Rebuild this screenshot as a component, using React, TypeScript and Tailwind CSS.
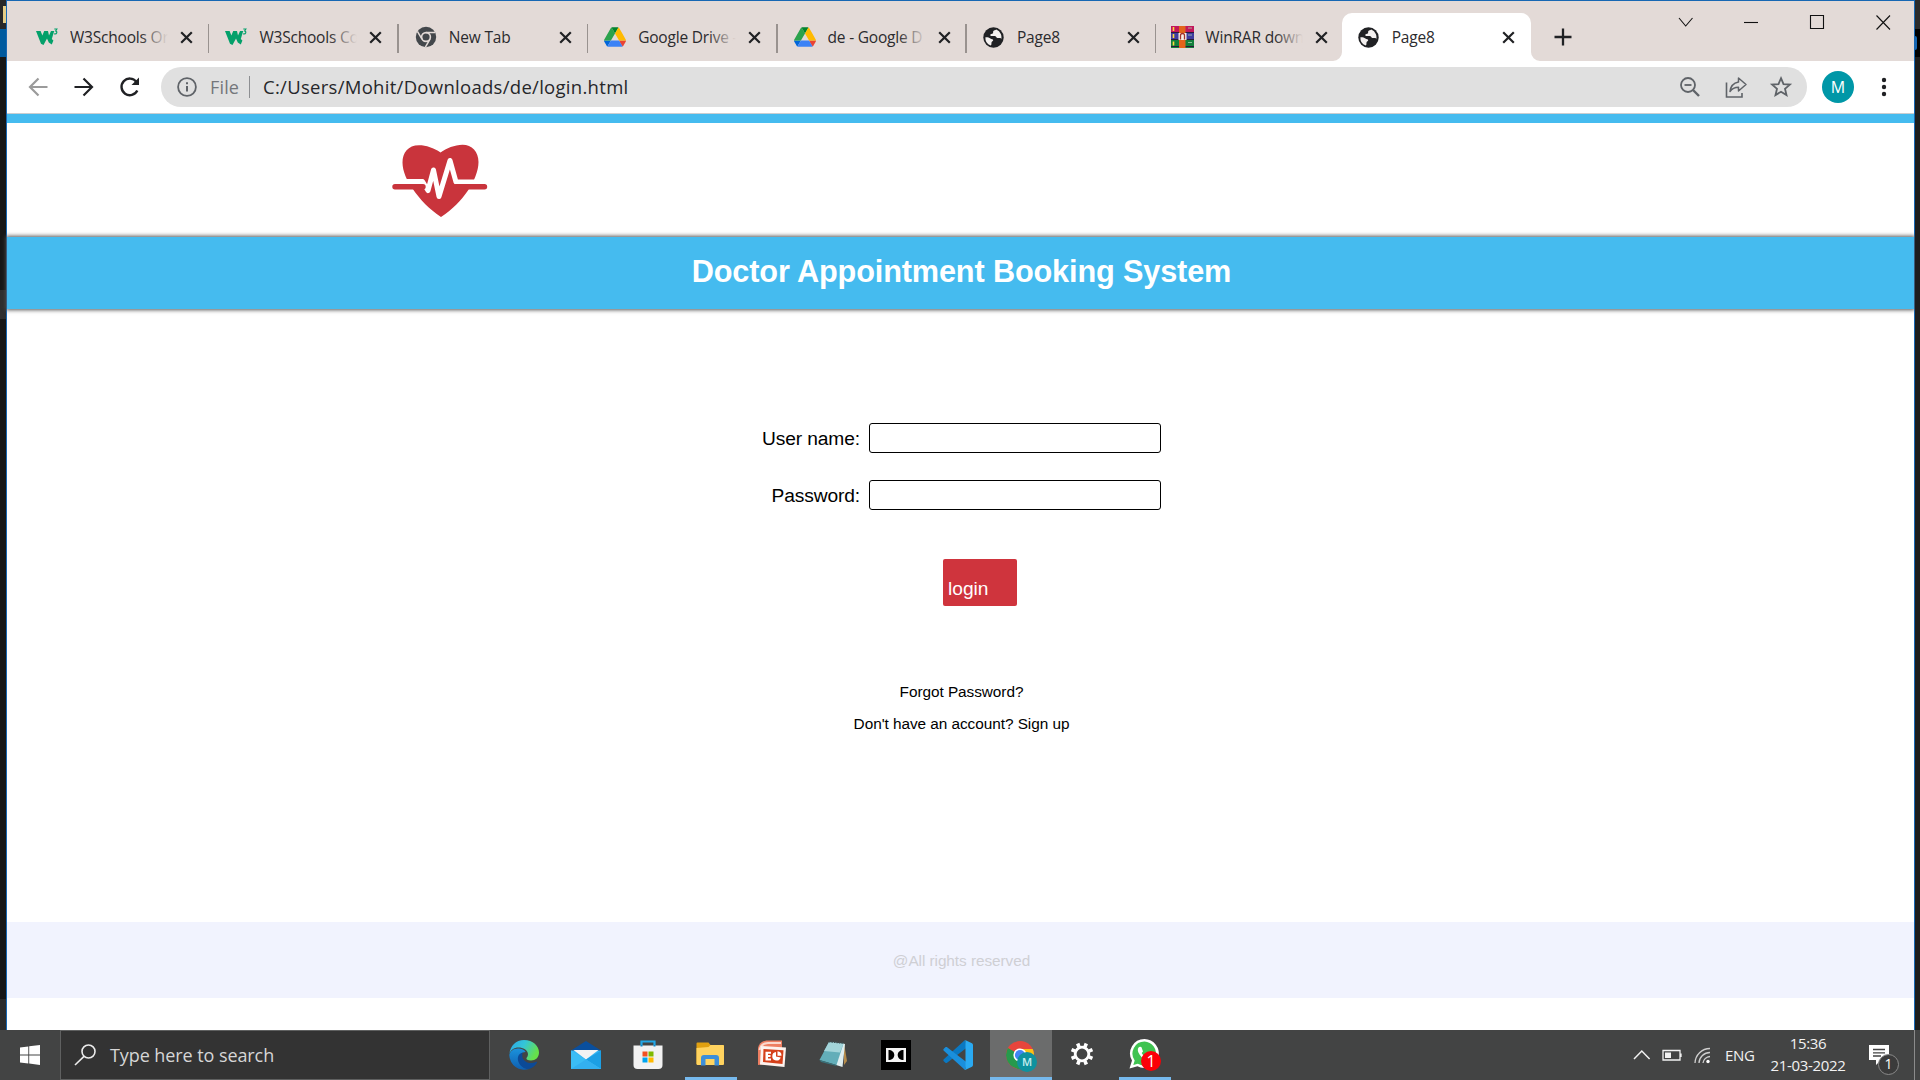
import type { ReactNode } from "react";

const UI = "font-['Open_Sans','Noto_Sans',sans-serif]";
const ARIAL = "font-['Liberation_Sans',Arial,sans-serif]";

/* ---------- favicons ---------- */

const W3 = () => (
  <svg width="22" height="18" viewBox="0 0 22 18">
    <path d="M0 3h4.600l1.800 4.600L8.200 3H12l1 4.600L15 3h3.200l-2.400 8 1.600 1.500-1.600 4-3-2L11 10.500 7.500 17 5 15.800z" fill="#04a06a" />
    <path d="M18.300 1h2.600l-1.300 2c2 .2 1.600 3.600-1.500 2.800" fill="none" stroke="#04a06a" strokeWidth="1.100" />
  </svg>
);

const ChromeGray = () => (
  <svg width="22" height="22" viewBox="0 0 22 22">
    <circle cx="11" cy="11" r="10.200" fill="#43474b" />
    <circle cx="11" cy="11" r="4.400" fill="none" stroke="#e3dad7" strokeWidth="1.600" />
    <path d="M11 6.400h9M7 13.200L2.400 5.400M15 13.200l-4.600 8" stroke="#e3dad7" strokeWidth="1.500" fill="none" />
  </svg>
);

const Drive = () => (
  <svg width="22" height="20" viewBox="0 0 87.3 78">
    <path d="M6.6 66.85l3.85 6.65c.8 1.4 1.95 2.5 3.3 3.3L27.5 53H0c0 1.55.4 3.1 1.2 4.5z" fill="#0066da" />
    <path d="M43.65 25L29.9 1.2c-1.35.8-2.5 1.9-3.3 3.3l-25.4 44A9.06 9.06 0 000 53h27.5z" fill="#2ba24c" />
    <path d="M73.55 76.8c1.35-.8 2.5-1.9 3.3-3.3l1.6-2.75L86.1 57.5c.8-1.4 1.2-2.95 1.2-4.5H59.8l5.85 11.5z" fill="#ea4335" />
    <path d="M43.65 25L57.4 1.2C56.05.4 54.5 0 52.9 0H34.4c-1.6 0-3.15.45-4.5 1.2z" fill="#00832d" />
    <path d="M59.8 53H27.5L13.75 76.8c1.35.8 2.9 1.2 4.5 1.2h50.8c1.6 0 3.15-.45 4.5-1.2z" fill="#3b82f6" />
    <path d="M73.4 26.5l-12.7-22c-.8-1.4-1.95-2.5-3.3-3.3L43.65 25 59.8 53h27.45c0-1.55-.4-3.1-1.2-4.5z" fill="#ffba00" />
  </svg>
);

const Globe = () => (
  <svg width="21" height="21" viewBox="0 0 21 21">
    <circle cx="10.5" cy="10.5" r="10.2" fill="#202124" />
    <path d="M13.3 2.6c-1 .8-2.3.7-3 1.6-.6.8.3 1.6-.6 2.3-.8.6-2 .3-2.4 1.2-.3.9.5 1.3 1.4 1.3h3c1.4 0 1.4 1.6 2.6 2 1.300.3 2.500-.5 3.500.2.600.5.300 1.500 0 2.200A8.200 8.200 0 0013.300 2.600z" fill="#f4f1f0" />
    <path d="M2.400 10.200c1.800-.2 3.600.1 5 1.200 1.200.9 2.600.5 2.800 1.700.1 1.200-1.500 1.300-1.700 2.500-.2 1 .3 2.200-.7 3A8.200 8.200 0 012.400 10.200z" fill="#f4f1f0" />
  </svg>
);

const WinRar = () => (
  <svg width="23" height="22" viewBox="0 0 23 22">
    <path d="M0 0h23v7H0z" fill="#c2185b" />
    <path d="M0 7h23v7H0z" fill="#3f3d9e" />
    <path d="M0 14h23v8H0z" fill="#12803c" />
    <path d="M0 6.500h23M0 13.500h23M0 20.500h23" stroke="#2a1a3a" strokeWidth="1" />
    <path d="M2.500 1v4M2.500 8v4M2.500 15.500v4" stroke="#ffd83b" strokeWidth="1.600" />
    <path d="M17 2h4M17 9h4M17 16.500h4" stroke="#a9d2b0" strokeWidth=".8" />
    <path d="M8 0h6.500v22H8z" fill="#e2641b" />
    <path d="M7.500 7h8v7h-8z" fill="#f6efe6" />
    <path d="M9.500 13.500V9.500a2 2 0 014 0v4" fill="none" stroke="#a4322a" strokeWidth="1.300" />
  </svg>
);

const Close = () => (
  <svg width="13" height="13" viewBox="0 0 13 13">
    <path d="M1.200 1.200l10.600 10.600M11.800 1.200L1.200 11.800" stroke="#202124" strokeWidth="2.200" />
  </svg>
);

function Tab({ icon, title, fade = false, active = false, divider = true }: { icon: ReactNode; title: string; fade?: boolean; active?: boolean; divider?: boolean }) {
  return (
    <div className={`relative flex h-[48px] w-[189.400px] shrink-0 items-center ${active ? "rounded-t-[10px] bg-white" : ""}`}>
      <div className="ml-[15px] flex w-[24px] shrink-0 justify-center">{icon}</div>
      <div className="relative ml-[11px] w-[98px] overflow-hidden whitespace-nowrap pt-px text-[15.500px] tracking-[-0.200px] text-[#2b2b2e]">
        {title}
        {fade && <span className="absolute inset-y-0 right-0 w-[28px] bg-linear-to-r from-[#e3dad7]/0 to-[#e3dad7]" />}
      </div>
      <div className="ml-[12px]"><Close /></div>
      {divider && <span className="absolute right-0 top-[11px] h-[29px] w-[1.500px] bg-[#99928f]" />}
      {active && (
        <>
          <svg className="absolute -left-[9px] bottom-0" width="9" height="9"><path d="M9 0v9H0a9 9 0 009-9z" fill="#fff" /></svg>
          <svg className="absolute -right-[9px] bottom-0" width="9" height="9"><path d="M0 0v9h9a9 9 0 01-9-9z" fill="#fff" /></svg>
        </>
      )}
    </div>
  );
}

function TabStrip() {
  return (
    <div className="flex h-[60px] items-start bg-[#e3dad7] pl-[13px]">
      <div className="flex pt-[12px]">
        <Tab icon={<W3 />} title="W3Schools Or" fade />
        <Tab icon={<W3 />} title="W3Schools Co" fade />
        <Tab icon={<ChromeGray />} title="New Tab" />
        <Tab icon={<Drive />} title="Google Drive -" fade />
        <Tab icon={<Drive />} title="de - Google D" fade />
        <Tab icon={<Globe />} title="Page8" />
        <div className="-ml-px"><Tab icon={<WinRar />} title="WinRAR down" fade divider={false} /></div>
        <div className="-ml-[3px]"><Tab icon={<Globe />} title="Page8" active divider={false} /></div>
        <div className="ml-[23px] flex h-[48px] items-center">
          <svg width="18" height="18" viewBox="0 0 18 18"><path d="M9 .5v17M.5 9h17" stroke="#202124" strokeWidth="2.300" /></svg>
        </div>
      </div>
      <div className="ml-auto flex h-[42px] items-center pr-[15px]">
        <svg width="228" height="20" viewBox="0 0 228 20" fill="none" stroke="#111" strokeWidth="1.100">
          <path d="M8 6l6.700 8L21.500 6" />
          <path d="M73 10.500h14" />
          <path d="M139.500 3.500h13v13h-13z" />
          <path d="M205.500 3.500l13.500 14M219 3.500l-13.500 14" />
        </svg>
      </div>
    </div>
  );
}

function Toolbar() {
  return (
    <div className="flex h-[52px] items-center bg-white">
      <svg width="154" height="30" viewBox="0.5 0 154 30" fill="none" strokeWidth="2.200" className="shrink-0">
        <path d="M41 15H23.500M32 6.500L23.500 15l8.500 8.500" stroke="#9b9b9b" />
        <path d="M68 15h17.500M77 6.500l8.500 8.500-8.500 8.500" stroke="#202124" />
        <path d="M130.800 18.500a8.300 8.300 0 11-.9-8.700" stroke="#202124" strokeWidth="2.400" />
        <path d="M132.500 5.500v7.500H125z" fill="#202124" />
      </svg>
      <div className="flex h-[40px] w-[1646px] shrink-0 items-center rounded-full bg-[#e0e0e0] pr-[12px] pl-[16px]">
        <svg width="20" height="20" viewBox="0 0 20 20">
          <circle cx="10" cy="10" r="8.900" fill="none" stroke="#5f6368" strokeWidth="1.800" />
          <path d="M10 9v5.500M10 5.300v2" stroke="#5f6368" strokeWidth="2" />
        </svg>
        <span className="ml-[13px] w-[29px] text-[18px] tracking-[0.150px] text-[#74777b]">File</span>
        <span className="ml-[10px] h-[22px] w-px bg-[#8d8f92]" />
        <span className="ml-[13px] text-[18.500px] tracking-[0.290px] whitespace-nowrap text-[#26272a]">C:/Users/Mohit/Downloads/de/login.html</span>
        <svg width="118" height="24" viewBox="0 0 118 24" fill="none" stroke="#5f6368" strokeWidth="1.800" className="ml-auto">
          <circle cx="11" cy="10" r="7" />
          <path d="M16 15l6 6" strokeWidth="2.400" />
          <path d="M7.500 10h7" />
          <path d="M49.500 7.500v14.500H65v-4" strokeWidth="1.600" />
          <path d="M61.500 3L69 9.500 61.500 16v-3.700c-4 0-6.500 1.200-8.500 4.200.5-5 3.500-8.600 8.500-9.600z" strokeWidth="1.500" strokeLinejoin="round" />
          <path d="M104 3.200l2.500 5.900 6.400.5-4.900 4.200 1.500 6.300-5.500-3.400-5.500 3.400 1.500-6.300-4.900-4.200 6.400-.5z" strokeWidth="1.800" />
        </svg>
      </div>
      <div className="ml-[15px] flex size-[32px] items-center justify-center rounded-full bg-[#0097a7] text-[16px] text-white">M</div>
      <svg width="6" height="20" viewBox="0 0 6 20" className="ml-[27px]" fill="#202124">
        <circle cx="3" cy="3" r="2.200" /><circle cx="3" cy="10" r="2.200" /><circle cx="3" cy="17" r="2.200" />
      </svg>
    </div>
  );
}

/* ---------- page ---------- */

function HeartLogo() {
  return (
    <svg width="96" height="74" viewBox="0 0 96 74">
      <path d="M48.500 8.500C42 4 34 1.300 27 1.300 16 1.300 10.500 9 10.500 18.500c0 9 4.500 18 10 26 7 10.500 17 21 28.500 28.500 11-7 20.500-17 27-26.500 6-9 10.500-19.500 10.500-28.500C86.500 8 80 .8 70.500.8c-8 0-16 3.700-22 7.700z" fill="#c9343c" />
      <path d="M10 37.500h20.500l5.500 9 5.500-20.500 5.500 26.500L58 16.500l6 21.500h24" fill="none" stroke="#fff" strokeWidth="5" strokeLinejoin="round" strokeLinecap="round" />
      <path d="M3 42.800h28M64 42.800h28.500" stroke="#c9343c" strokeWidth="5.400" strokeLinecap="round" />
    </svg>
  );
}

function Field({ label }: { label: string }) {
  return (
    <div className="flex h-[30px] items-center">
      <label className="w-[853px] pt-[2px] text-right text-[19.200px] tracking-[-0.120px] text-black">{label}</label>
      <input className="ml-[9px] h-[30px] w-[292px] rounded-[3px] border border-black bg-white outline-none" />
    </div>
  );
}

function Page() {
  return (
    <main className={`flex grow flex-col bg-white ${ARIAL}`}>
      <div className="h-px bg-[#c9cdd0]" />
      <div className="h-[9px] bg-[#45bbef]" />
      <div className="h-[114px] pt-[20.500px] pl-[385px]"><HeartLogo /></div>
      <header className="flex h-[72px] shrink-0 justify-center bg-[#45bbef] pl-[2px] shadow-[0_0_4px_1px_#555]">
        <h1 className="pt-[16px] text-[30.700px] leading-[37px] font-bold tracking-[-0.150px] text-white">Doctor Appointment Booking System</h1>
      </header>
      <form className="flex flex-col pt-[114px]">
        <Field label="User name:" />
        <div className="h-[27px]" />
        <Field label="Password:" />
        <button type="button" className="mt-[49px] ml-[936px] flex h-[47px] w-[74px] rounded-[2px] bg-[#cf343d] pt-[19px] pl-[5px] text-[19.200px] leading-[22px] text-white">login</button>
      </form>
      <div className="flex flex-col items-center pt-[70px] pl-[2px] text-[15.360px] leading-[32px] tracking-[-0.050px] text-black">
        <a>Forgot Password?</a>
        <a>Don't have an account? Sign up</a>
      </div>
      <footer className="mt-[182px] flex h-[76px] items-center justify-center bg-[#f1f3fe] pt-[2px] pl-[2px] text-[15.360px] tracking-[-0.060px] text-[#cfcfd4]">@All rights reserved</footer>
    </main>
  );
}

/* ---------- taskbar ---------- */

const Edge = () => (
  <svg width="30" height="30" viewBox="0 0 30 30">
    <defs>
      <linearGradient id="eg" x1="0" y1="0" x2="1" y2=".4"><stop offset="0" stopColor="#2aa5e8" /><stop offset=".5" stopColor="#34c5d8" /><stop offset="1" stopColor="#66e04a" /></linearGradient>
      <linearGradient id="eb" x1="0" y1="0" x2="0" y2="1"><stop offset="0" stopColor="#1b92dc" /><stop offset="1" stopColor="#0f5fb0" /></linearGradient>
    </defs>
    <path d="M.5 14C1 6 7 0 15 0c9 0 15 6 15 12.500 0 5-3.500 8-8 8-3.500 0-5-1.200-4.500-2.500 1-1.200 1.500-2.500 1.500-3.800C19 10 14 7.500 9.500 7.500 5 7.500 1.500 10 .5 14z" fill="url(#eg)" />
    <path d="M.3 15C1 11 5 8 10 8.500c4 .3 6.500 2.500 6.500 3.500-4 0-6.500 3-6.500 6.500 0 5 4.500 9 10 10.500A15 15 0 01.3 15z" fill="url(#eb)" />
    <path d="M13.500 12.500C9 14 8 18 9.500 22c1.800 4.500 6 7.300 10.500 7 3.500-1 6.500-3.500 8-6.500.3-.8-.3-1-1-.6-5.500 2.600-12 .6-13.500-4.400-.5-2 0-3.500 0-5z" fill="#0c4a97" />
  </svg>
);

const Mail = () => (
  <svg width="30" height="28" viewBox="0 0 30 28">
    <path d="M0 9.500L15 0l15 9.500z" fill="#0a4f9d" />
    <path d="M0 9.500h30V28H0z" fill="#35b5f2" />
    <path d="M2.500 9h25L15 18.500z" fill="#f3f3f3" />
    <path d="M30 9.500V28L15 18.500z" fill="#1c9fe4" />
    <path d="M0 9.500l15 9L30 28H0z" fill="#3bbdf5" />
    <path d="M0 28l15-9.500L30 28z" fill="#2ea6ec" opacity=".6" />
  </svg>
);

const Store = () => (
  <svg width="30" height="30" viewBox="0 0 30 30">
    <path d="M8.500 7V1.500h13V7" fill="none" stroke="#22a7e6" strokeWidth="2.200" />
    <path d="M.5 5.500h29V25a4 4 0 01-4 4h-21a4 4 0 01-4-4z" fill="#f2f2f2" />
    <path d="M7.500 5h2v1.500h-2zM20.500 5h2v1.500h-2z" fill="#1189c9" />
    <path d="M9.500 11.500h5v5h-5z" fill="#f25022" /><path d="M15.500 11.500h5v5h-5z" fill="#7fba00" />
    <path d="M9.500 17.500h5v5h-5z" fill="#00a4ef" /><path d="M15.500 17.500h5v5h-5z" fill="#ffb900" />
  </svg>
);

const Folder = () => (
  <svg width="30" height="26" viewBox="0 0 30 26" className="-mt-[2px]">
    <path d="M1.500 2.500a1 1 0 011-1h11l2 2.500H28a1 1 0 011 1v18H1.500z" fill="#e0a010" />
    <path d="M1.500 7l12-1 2-2H28a1 1 0 011 1v18a1 1 0 01-1 1H2.500a1 1 0 01-1-1z" fill="#ffd35f" />
    <path d="M6 24.500V17a3 3 0 013-3h12a3 3 0 013 3v7.500h-4.500V18h-9v6.500z" fill="#3d8fd9" />
  </svg>
);

const PowerPoint = () => (
  <svg width="30" height="28" viewBox="0 0 30 28" className="-mt-[2px]">
    <path d="M1 8C2 3 6 .5 11 .5h14V22L1 25z" fill="#ee7f62" />
    <path d="M2.500 10c1-4.500 4-7 8.500-7h13" stroke="#fbd9cd" strokeWidth="2" fill="none" />
    <path d="M4 6l25 1.500L27.500 27 3 24.500z" fill="#fdf3ef" />
    <path d="M6.500 9l20 1.200-1 13.800L6 22z" fill="#d5401a" />
    <path d="M8.500 11.800h5.500v2h-3v1.300h2.500v2H11v1.300h3v2H8.500z" fill="#fff" />
    <path d="M19 12a4.300 4.300 0 104.700 5.500L19 16.500z" fill="#fff" />
    <path d="M20.500 11.300a4.400 4.400 0 014 4.400h-4z" fill="#fff" />
  </svg>
);

const Notepad = () => (
  <svg width="30" height="28" viewBox="0 0 30 28" className="-mt-[2px]">
    <path d="M25 3l3 18-3 4z" fill="#b58b4a" />
    <path d="M10 2l16 2-2.500 23L17 25z" fill="#dfeef0" />
    <path d="M10 2l14.500 1.500L17.500 25 .5 20z" fill="#63aeb9" />
    <path d="M10 2l14.500 1.500-3.500 9L5 11z" fill="#a3d5da" />
    <path d="M.5 20L17.500 25v1L2 22z" fill="#39737c" />
    <path d="M10 1.500l15 1.500" stroke="#3f4d50" strokeWidth="1.800" strokeDasharray="1.500 1" />
  </svg>
);

const Dolby = () => (
  <svg width="30" height="30" viewBox="0 0 30 30">
    <path d="M0 0h30v30H0z" fill="#000" />
    <path d="M5 8h20v14H5z" fill="#f4f4f4" />
    <path d="M7.500 10v10c3.300 0 5.800-2 5.800-5s-2.500-5-5.800-5zM22.500 10v10c-3.300 0-5.800-2-5.800-5s2.500-5 5.800-5z" fill="#000" />
  </svg>
);

const VSCode = () => (
  <svg width="30" height="30" viewBox="0 0 30 30">
    <path d="M22 0L.8 19.200c-.6.6-.6 1.400 0 2l1.600 1.500c.5.400 1.200.5 1.700.1L24 7.500z" fill="#0a78c2" />
    <path d="M22 30L.8 10.800c-.6-.6-.6-1.400 0-2l1.600-1.500c.5-.4 1.200-.5 1.700-.1L24 22.500z" fill="#1a8fdc" />
    <path d="M22 0l7 3.300c.6.300 1 .9 1 1.600v20.200c0 .7-.4 1.300-1 1.600L22 30c-.5-.3.500-.8.500-1.500v-27C22.500.8 22.300.3 22 0z" fill="#2aaaf2" />
  </svg>
);

const ChromeM = () => (
  <span className="relative block h-[32px] w-[32px]">
    <svg width="28" height="28" viewBox="0 0 28 28" className="mt-[2px] ml-[2px]">
      <circle cx="14" cy="14" r="14" fill="#e8453c" />
      <path d="M14 14L1.900 7A14 14 0 0014 28z" fill="#269a4c" />
      <path d="M14 8h12.700A14 14 0 0114 28z" fill="#fbc116" />
      <circle cx="14" cy="14" r="6.600" fill="#fff" /><circle cx="14" cy="14" r="5.100" fill="#4285f4" />
    </svg>
    <span className="absolute top-[13px] left-[13px] flex size-[20px] items-center justify-center rounded-full bg-[#0e929f] text-[11px] font-semibold text-[#c6eef0]">M</span>
  </span>
);

const Gear = () => (
  <svg width="24" height="24" viewBox="-12 -12 24 24" fill="none" stroke="#fff" className="-mt-[2px]">
    <circle r="6.800" strokeWidth="2.800" />
    {[22.5, 67.5, 112.5, 157.5, 202.5, 247.5, 292.5, 337.5].map((a) => (
      <path key={a} d="M0-7.500V-11.300" strokeWidth="3.600" transform={`rotate(${a})`} />
    ))}
  </svg>
);

const WhatsApp = () => (
  <span className="relative block h-[32px] w-[32px]">
    <svg width="30" height="30" viewBox="0 0 30 30" className="ml-px">
      <path d="M15.500 0A14.400 14.400 0 003 21.600L.5 29.500l8-2.200A14.500 14.500 0 1015.500 0z" fill="#fff" />
      <path d="M15.500 2.500A12 12 0 005.700 21.400L4.300 26l4.500-1.200A12 12 0 1015.500 2.500z" fill="#3fc351" />
      <path d="M10.800 7.800c-2 .8-2.500 3-1.500 5.500 1.700 4 5 7 9 8 2 .4 3.500-.8 3.700-2.800l-3.300-1.700-1.500 1.600c-2-.8-3.600-2.400-4.500-4.300l1.300-1.500-1.500-4.300c-.4-.6-1-.7-1.700-.5z" fill="#fff" />
    </svg>
    <span className="absolute top-[12px] left-[13px] flex size-[20px] items-center justify-center rounded-full bg-[#fb0007] text-[16px] leading-none text-white">1</span>
  </span>
);

function Slot({ children, active = false, line = false }: { children: ReactNode; active?: boolean; line?: boolean }) {
  return (
    <div className={`relative flex h-full w-[62px] items-center justify-center pr-[2px] ${active ? "bg-[#6b6c6c]" : ""}`}>
      {children}
      {line && <span className={`absolute bottom-0 h-[3px] bg-[#76b9ed] ${active ? "inset-x-0" : "inset-x-[5px]"}`} />}
    </div>
  );
}

function Taskbar() {
  return (
    <div className="flex h-[50px] shrink-0 bg-[#434444]">
      <div className="flex w-[60px] items-center justify-center">
        <svg width="20" height="20" viewBox="0 0 20 20" fill="#fff"><path d="M0 2.600L8.300 1.400v8.100H0zM9.200 1.300L20 0v9.500H9.200zM0 10.400h8.300v8.200L0 17.400zM9.200 10.400H20V20L9.200 18.600z" /></svg>
      </div>
      <div className="flex w-[430px] items-center border border-[#5f6060] bg-[#333]">
        <svg width="22" height="22" viewBox="0 0 22 22" fill="none" stroke="#ececec" strokeWidth="1.600" className="ml-[13px]"><circle cx="14.500" cy="7.500" r="6.500" /><path d="M10 12.300L1 21" /></svg>
        <span className="ml-[14px] text-[18px] tracking-[-0.080px] text-[#d6d6d6]">Type here to search</span>
      </div>
      <div className="ml-[4px] flex">
        <Slot><Edge /></Slot>
        <Slot><Mail /></Slot>
        <Slot><Store /></Slot>
        <Slot line><Folder /></Slot>
        <Slot><PowerPoint /></Slot>
        <Slot><Notepad /></Slot>
        <Slot><Dolby /></Slot>
        <Slot><VSCode /></Slot>
        <Slot active line><ChromeM /></Slot>
        <Slot><Gear /></Slot>
        <Slot line><WhatsApp /></Slot>
      </div>
      <div className="ml-auto flex items-center text-[15px] text-[#f2f2f2]">
        <svg width="78" height="18" viewBox="0 0 78 18" fill="none" stroke="#f2f2f2" strokeWidth="1.300">
          <path d="M1 13l7.800-8 7.800 8" strokeWidth="1.500" />
          <path d="M30 4.500h17v9.500H30zM48 7.500v3.500" />
          <path d="M32 6.500h6v5.500h-6z" fill="#f2f2f2" stroke="none" />
          <g stroke="#cfcfcf"><path d="M62 17A15 15 0 0177 2.500M66 17A11 11 0 0177 6.500M70 17a7.500 7.500 0 017-6.500" /></g>
          <circle cx="75" cy="15.500" r="1.700" fill="#fff" stroke="none" />
        </svg>
        <span className="ml-[14px] w-[28px] text-[15px] tracking-[-0.300px]">ENG</span>
        <div className="ml-[16px] flex w-[78px] flex-col items-center pb-[2px] text-[15px] leading-[22px] tracking-[-0.350px] whitespace-nowrap">
          <span>15:36</span>
          <span>21-03-2022</span>
        </div>
        <span className="relative mt-[7px] ml-[21px] block h-[30px] w-[32px]">
          <svg width="22" height="22" viewBox="0 0 22 22"><path d="M1 1h20v15H13l-5 5v-5H1z" fill="#fff" /><path d="M5 5.500h12M5 8.800h12M5 12h8" stroke="#444" strokeWidth="1.300" /></svg>
          <span className="absolute top-[10px] left-[10px] flex size-[21px] items-center justify-center rounded-full border border-[#8a8a8a] bg-[#3b3b3b] text-[14px] leading-none text-white">1</span>
        </span>
        <span className="ml-[14px] h-full w-px bg-[#8b8b8b]" />
        <span className="w-[5px]" />
      </div>
    </div>
  );
}

export default function App() {
  return (
    <div className={`flex h-[1080px] w-[1920px] flex-col overflow-hidden bg-[#171717] ${UI}`}>
      <div className="flex h-[1030px]">
        <div className="flex w-[6px] flex-col">
          <div className="flex h-[29px] justify-end bg-[#272727] pt-[6px]"><div className="h-[17px] w-[3px] bg-[#e5cd86]" /></div>
          <div className="h-[28px] bg-[#005a9e]" />
          <div className="h-[233px] bg-[#171717]" />
          <div className="h-[29px] bg-[#2f2f2f]" />
          <div className="h-[680px] bg-[#171717]" />
          <div className="grow bg-[#2b2b2b]" />
        </div>
        <div className="flex w-[1909px] flex-col border-x border-t border-[#1767b3] bg-white">
          <TabStrip />
          <Toolbar />
          <Page />
        </div>
        <div className="flex w-[5px] flex-col">
          <div className="h-[29px] bg-[#2b2b2b]" />
          <div className="flex h-[28px] items-center bg-black"><div className="h-[14px] w-[2px] rounded-r bg-[#1767b3]" /></div>
          <div className="grow bg-[#1d1d1d]" />
        </div>
      </div>
      <Taskbar />
    </div>
  );
}
